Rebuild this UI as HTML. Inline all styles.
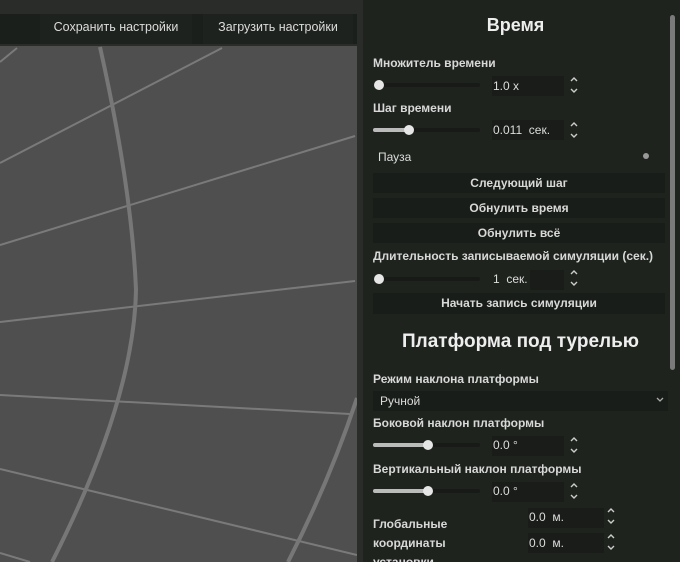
<!DOCTYPE html>
<html><head><meta charset="utf-8"><style>
*{margin:0;padding:0;box-sizing:border-box}
html,body{width:680px;height:562px;overflow:hidden}
body{background:#2a2c2a;font-family:"Liberation Sans","DejaVu Sans",sans-serif;color:#dcdcdc;position:relative}
.a{position:absolute;white-space:nowrap}
.lbl{font-size:12px;font-weight:bold;color:#d8d8d8}
.btn{position:absolute;left:373px;width:292px;height:20px;background:#191d19;font-size:12px;font-weight:bold;text-align:center;line-height:20px;color:#d8d8d8}
.inp{position:absolute;background:#191c19;height:20px}
.sp{position:absolute;width:10px;height:20px}
.track{position:absolute;height:4px;background:#171a17;border-radius:2px}
.fill{position:absolute;height:4px;background:#bbb;border-radius:2px}
.knob{position:absolute;width:10px;height:10px;border-radius:50%;background:#e6e6e6}
.val{position:absolute;font-size:12px;color:#ddd}
</style></head><body>
<svg width="0" height="0" style="position:absolute"><defs><symbol id="s" viewBox="0 0 10 20"><path d="M2 6 L5 3 L8 6 M2 14 L5 17 L8 14" fill="none" stroke="#ccc" stroke-width="1.4"/></symbol></defs></svg>
<div class="a" style="left:0;top:46px;width:357px;height:516px;background:#4f4f4f"></div>
<svg class="a" style="left:0;top:46px" width="357" height="516" viewBox="0 46 357 516">
<g fill="none" stroke="#7a7a7a" stroke-width="2">
<path d="M0 62 L17 48"/><path d="M0 163 L222 48"/><path d="M0 245 L355 136"/><path d="M0 322 L355 281"/><path d="M0 395 L350 414"/><path d="M0 469 L357 555"/><path d="M0 553 L30 562"/>
</g>
<path d="M100 47 Q132 190 136 290 Q134 400 52 562" fill="none" stroke="#777" stroke-width="4"/>
<path d="M357 398 Q330 480 288 562" fill="none" stroke="#777" stroke-width="4"/>
</svg>
<div class="a" style="left:0;top:14px;width:357px;height:30px;background:#1b1f1b"></div>
<div class="a" style="left:40px;top:14px;width:152px;height:30px;background:#1e221e;font-size:12.5px;line-height:26px;text-align:center">Сохранить настройки</div>
<div class="a" style="left:203px;top:14px;width:150px;height:30px;background:#1e221e;font-size:12.5px;line-height:26px;text-align:center">Загрузить настройки</div>
<div class="a" style="left:363px;top:0;width:317px;height:562px;background:#1e231e"></div>
<div class="a" style="left:670px;top:15px;width:5px;height:355px;background:#7a7a7a;border-radius:3px"></div>
<div class="a" style="left:363px;top:15px;width:305px;text-align:center;font-size:18px;font-weight:bold;color:#eee">Время</div>
<div class="a lbl" style="left:373px;top:56px">Множитель времени</div>
<div class="track" style="left:375px;top:83px;width:105px"></div><div class="knob" style="left:374px;top:80px"></div>
<div class="inp" style="left:492px;top:76px;width:72px"></div><div class="val" style="left:493px;top:79px">1.0 x</div>
<svg class="sp" style="left:569px;top:75px"><use href="#s"/></svg>
<div class="a lbl" style="left:373px;top:101px">Шаг времени</div>
<div class="track" style="left:375px;top:128px;width:105px"></div><div class="fill" style="left:373px;top:128px;width:36px"></div><div class="knob" style="left:404px;top:125px"></div>
<div class="inp" style="left:492px;top:120px;width:72px"></div><div class="val" style="left:493px;top:123px">0.011&nbsp; сек.</div>
<svg class="sp" style="left:569px;top:120px"><use href="#s"/></svg>
<div class="a" style="left:378px;top:150px;font-size:12px">Пауза</div>
<div class="a" style="left:643px;top:153px;width:6px;height:6px;border-radius:50%;background:#999"></div>
<div class="btn" style="top:173px">Следующий шаг</div>
<div class="btn" style="top:198px">Обнулить время</div>
<div class="btn" style="top:223px">Обнулить всё</div>
<div class="a lbl" style="left:373px;top:249px">Длительность записываемой симуляции (сек.)</div>
<div class="track" style="left:375px;top:277px;width:105px"></div><div class="knob" style="left:374px;top:274px"></div>
<div class="inp" style="left:530px;top:270px;width:34px"></div><div class="val" style="left:493px;top:272px">1&nbsp; сек.</div>
<svg class="sp" style="left:569px;top:268px"><use href="#s"/></svg>
<div class="btn" style="top:293px;height:21px">Начать запись симуляции</div>
<div class="a" style="left:363px;top:331px;width:315px;text-align:center;font-size:19px;font-weight:bold;color:#eee">Платформа под турелью</div>
<div class="a lbl" style="left:373px;top:372px">Режим наклона платформы</div>
<div class="a" style="left:373px;top:391px;width:295px;height:20px;background:#191d19"></div>
<div class="a" style="left:380px;top:394px;font-size:12px">Ручной</div>
<svg class="a" style="left:655px;top:396px" width="10" height="8"><path d="M2 2 L5 5 L8 2" fill="none" stroke="#aaa" stroke-width="1.3"/></svg>
<div class="a lbl" style="left:373px;top:416px">Боковой наклон платформы</div>
<div class="track" style="left:375px;top:443px;width:105px"></div><div class="fill" style="left:373px;top:443px;width:55px"></div><div class="knob" style="left:423px;top:440px"></div>
<div class="inp" style="left:492px;top:436px;width:72px"></div><div class="val" style="left:493px;top:438px">0.0 °</div>
<svg class="sp" style="left:569px;top:435px"><use href="#s"/></svg>
<div class="a lbl" style="left:373px;top:462px">Вертикальный наклон платформы</div>
<div class="track" style="left:375px;top:489px;width:105px"></div><div class="fill" style="left:373px;top:489px;width:55px"></div><div class="knob" style="left:423px;top:486px"></div>
<div class="inp" style="left:492px;top:482px;width:72px"></div><div class="val" style="left:493px;top:484px">0.0 °</div>
<svg class="sp" style="left:569px;top:481px"><use href="#s"/></svg>
<div class="a lbl" style="left:373px;top:517px">Глобальные</div>
<div class="a lbl" style="left:373px;top:536px">координаты</div>
<div class="a lbl" style="left:373px;top:555px">установки</div>
<div class="inp" style="left:528px;top:508px;width:76px"></div><div class="val" style="left:529px;top:510px">0.0&nbsp; м.</div>
<svg class="sp" style="left:606px;top:506px"><use href="#s"/></svg>
<div class="inp" style="left:528px;top:533px;width:76px"></div><div class="val" style="left:529px;top:536px">0.0&nbsp; м.</div>
<svg class="sp" style="left:606px;top:532px"><use href="#s"/></svg>
</body></html>
